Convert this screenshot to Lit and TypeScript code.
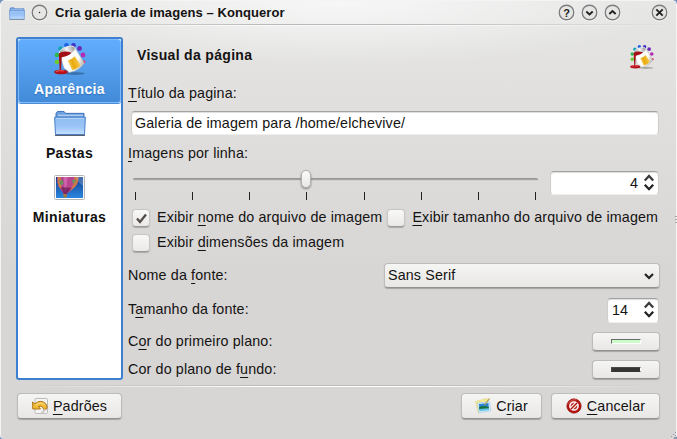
import { LitElement, html, css, svg } from "lit";
import { customElement, property } from "lit/decorators.js";

const folder = svg`
  <defs><linearGradient id="fg" x1="0" y1="0" x2="0" y2="1"><stop offset="0" stop-color="#8fbdf0"/><stop offset=".55" stop-color="#9cc4f8"/><stop offset="1" stop-color="#c3e0ff"/></linearGradient></defs>
  <path d="M2 9V3.500L3.500 1.500H10L11.500 3.500H30V9" fill="#6c9fdd" stroke="#3c71bd"/>
  <path d="M4 5.500H29" stroke="#c5dcf8"/>
  <path d="M.6 7.500H31.400L30.500 25.500H1.500Z" fill="url(#fg)" stroke="#467cc6"/>
  <path d="M2 8.700H30" stroke="#b9d6fa"/>
  <path d="M1 26.400H31" stroke="#555f70" stroke-width="1.200"/>`;

const paint = svg`
  <defs>
    <linearGradient id="pb" x1="0" y1="0" x2="1" y2=".4"><stop offset="0" stop-color="#e4e4e4"/><stop offset=".35" stop-color="#fff"/><stop offset=".8" stop-color="#fbfbf6"/><stop offset="1" stop-color="#c8c8c4"/></linearGradient>
    <linearGradient id="py" x1="0" y1=".4" x2="1" y2="0"><stop offset="0" stop-color="#f7cf5c"/><stop offset=".3" stop-color="#e8a90c"/><stop offset=".65" stop-color="#f3c140"/><stop offset="1" stop-color="#fff0b8"/></linearGradient>
    <linearGradient id="pi" x1="0" y1="0" x2="1" y2="0"><stop offset="0" stop-color="#8a8a8a"/><stop offset=".5" stop-color="#f4f4f4"/><stop offset="1" stop-color="#8f8f8f"/></linearGradient>
  </defs>
  <ellipse cx="21" cy="30.500" rx="10" ry="1.400" fill="#000" opacity=".25"/>
  <circle cx="3" cy="19" r="2.300" fill="#6ccb2c"/><circle cx="3" cy="12" r="2.300" fill="#2bb84c"/>
  <circle cx="6.500" cy="5.500" r="2.300" fill="#18a3b8"/><circle cx="12.500" cy="2.300" r="2.300" fill="#1d5fe0"/>
  <circle cx="19.500" cy="2.300" r="2.300" fill="#3f2fc4"/><circle cx="25.500" cy="5.500" r="2.400" fill="#6b2bb8"/>
  <circle cx="29" cy="12" r="2.400" fill="#b52bb4"/><circle cx="29.700" cy="19" r="1.800" fill="#e03a78"/>
  <path d="M5.300 10.500L21 5L30.300 20Q26.500 27 15.500 29.500L10 25Z" fill="url(#pb)" stroke="#a9a9a4" stroke-width=".5"/>
  <path d="M13.700 17.500Q18 16.500 20.800 13.300L26.700 22Q24 25.500 18.300 27.300Z" fill="url(#py)"/>
  <ellipse cx="13.200" cy="7.700" rx="8.400" ry="3.900" transform="rotate(-20 13.200 7.700)" fill="url(#pi)" stroke="#ececec" stroke-width=".8"/>
  <path d="M4.800 10.500Q10 7 17.500 9.800Q15 13 7.700 14.300L7 27.500H5.700Z" fill="#a30f17"/>
  <ellipse cx="7" cy="29" rx="6.800" ry="2.300" fill="#b5121b"/>
  <path d="M2 28.500Q6 27 10 28" stroke="#ee5a5a" fill="none"/>`;

const balloon = svg`
  <defs><linearGradient id="sky" x1="0" y1="0" x2="0" y2="1"><stop offset="0" stop-color="#123f8f"/><stop offset="1" stop-color="#2b86e0"/></linearGradient></defs>
  <rect x=".5" y=".5" width="31" height="24" rx="1" fill="#fff" stroke="#b4b4b4"/>
  <rect x="2" y="2" width="28" height="21" fill="url(#sky)"/>
  <path d="M3 2H25Q26 10 18 15L13 19H10L5 12Q3 8 3 2Z" fill="#b8468f"/>
  <path d="M4 2H7L8 14L5 12Q3 7 4 2ZM21 2H25Q26 10 18 15L16 16Q21 10 21 2Z" fill="#c87a4a"/>
  <path d="M10 2H14L12.500 16H11Z" fill="#cf62ac"/><path d="M5 6L9 5L10 9L7 10ZM18 5L23 5L20 9Z" fill="#6a9163"/>
  <path d="M7 12L18 13L13 19H10Z" fill="#6a1f55" opacity=".75"/>
  <path d="M9.500 19H13V22.500H10Z" fill="#a8793d"/><path d="M23 2H30V11Q25 8 23 2Z" fill="#fff" opacity=".22"/>`;

const undo = svg`
  <rect x="3" y=".5" width="12.500" height="15" rx="1" fill="#f4f4f4" stroke="#bcbcbc"/>
  <path d="M.5 4L2.800 5.800Q9 .8 14 6Q16 9 14.500 11L11.500 11.500Q11.500 7.800 6.500 8.500L8.500 11H.8Z" fill="#f2bb35" stroke="#a86d12" stroke-width=".9"/>
  <path d="M3.500 7Q9 3 13 7" stroke="#ffe391" fill="none"/>
  <path d="M8 15.500L12 11L14 12L11 15.500Z" fill="#ccc"/>`;

const picture = svg`
  <path d="M.5 3.500L12 .5L15.500 11L3.500 15Z" fill="#f6eb8e" stroke="#ded282" stroke-width=".6"/>
  <path d="M2.500 5L14.500 3.500L15.500 13L4 14.500Z" fill="#e9f5ff" stroke="#9dc7ee" stroke-width=".7"/>
  <path d="M3.800 6L13.500 5L14 11.500L4.800 12.500Z" fill="#2d83d3"/>
  <path d="M4 9Q8 7 13.800 9L14 11L4.500 12Z" fill="#17723f"/>
  <path d="M4.200 11L14 10.300L14.200 12.300L4.700 13.300Z" fill="#63c4ea"/>
  <path d="M14.500 .5L9.500 7" stroke="#b29a3c" stroke-width="1.200"/>`;

const deny = svg`
  <circle cx="8" cy="8" r="7.200" fill="#b3120f" stroke="#8b0a08" stroke-width=".6"/>
  <circle cx="8" cy="8" r="4.100" fill="#c4302c" stroke="#fff" stroke-width="1.500"/>
  <path d="M5 11L11 5" stroke="#fff" stroke-width="3.600"/><path d="M4.800 11.200L11.200 4.800" stroke="#b3120f" stroke-width="1.500"/>
  <path d="M2.500 5.500Q5 1.200 10.500 1.800" stroke="#e8706a" fill="none" stroke-width=".8"/>`;

const icons: Record<string, [string, unknown]> = {
  folder: ["0 0 32 27", folder],
  paint: ["0 0 32 32", paint],
  balloon: ["0 0 32 25", balloon],
  undo: ["0 0 16 16", undo],
  picture: ["0 0 16 16", picture],
  deny: ["0 0 16 16", deny],
};

@customElement("ui-icon")
class UiIcon extends LitElement {
  @property() name = "folder";
  static styles = css`
    :host { display: block; flex: none; }
    svg { display: block; width: 100%; height: 100%; }
  `;
  render() {
    const [box, body] = icons[this.name];
    return html`<svg viewBox=${box} preserveAspectRatio="none">${body}</svg>`;
  }
}

@customElement("title-button")
class TitleButton extends LitElement {
  @property() kind = "";
  static styles = css`
    :host { display: block; width: 17px; height: 17px; flex: none; }
    svg { display: block; }
    text { font: bold 11px "Liberation Sans", sans-serif; fill: #222; }
  `;
  render() {
    const glyphs: Record<string, unknown> = {
      menu: svg`<circle cx="8.500" cy="8.500" r=".8" fill="#333"/>`,
      help: svg`<text x="8.500" y="12.500" text-anchor="middle">?</text>`,
      down: svg`<path d="M5.300 7.500L8.500 10.500L11.700 7.500"/>`,
      up: svg`<path d="M5.300 10L8.500 7L11.700 10"/>`,
      close: svg`<path d="M5.300 5.300L11.700 11.700M11.700 5.300L5.300 11.700"/>`,
    };
    return html`<svg width="17" height="17" fill="none" stroke="#222" stroke-width="1.6" overflow="visible">
      <circle cx="8.500" cy="9.100" r="7.800" stroke="#fff" stroke-width="1.200"/>
      <circle cx="8.500" cy="8.500" r="7.300" fill="#e6e6e5" stroke="#7c7c7e" stroke-width="1.400"/>
      <g stroke-width=${this.kind === "menu" || this.kind === "help" ? "0" : "1.9"}>${glyphs[this.kind]}</g>
    </svg>`;
  }
}

const chevrons = html`<svg class="chev" width="12" height="18" fill="none" stroke="#222" stroke-width="2.3">
  <path d="M1.800 6.500L6 2L10.200 6.500" stroke="#3c3c3c"/><path d="M1.800 10.800L6 15.200L10.200 10.800"/></svg>`;

@customElement("app-root")
class AppRoot extends LitElement {
  static styles = css`
    * { box-sizing: border-box; }
    :host {
      display: block; width: 677px; height: 439px; overflow: hidden; background: #6f8fbd;
      font: 14.3px/18px "Liberation Sans", Arial, sans-serif; color: #141312; white-space: nowrap;
    }
    .window {
      height: 439px; display: flex; flex-direction: column; border-radius: 5px 5px 4px 4px; position: relative;
      border: solid #f4f4f4; border-width: 1px 1px 0 1px;
      background: radial-gradient(ellipse 330px 64px at 50% 0, #f7f7f7, rgba(247,247,247,0)),
        linear-gradient(#e6e6e5, #e0dfde 110px, #d7d6d5 270px, #d7d6d5);
    }
    .titlebar { height: 23px; flex: none; display: flex; align-items: center; padding: 0 8px 0 8px; }
    .titlebar ui-icon { width: 16px; height: 13px; margin-top: 1px; }
    .menu { margin-left: 6px; }
    .caption { font-size: 13px; font-weight: bold; margin-left: 7px; flex: 1; padding-top: 1px; letter-spacing: .08px; }
    .buttons { display: flex; gap: 6px; }
    .buttons :last-child { margin-left: 24px; }
    .rule { height: 2px; flex: none; }
    .rule.top { background: linear-gradient(#b8b8b8 50%, #fafafa 50%); -webkit-mask: linear-gradient(90deg, transparent, #000 40%, #000 60%, transparent); margin-bottom: 11px; }
    .rule.bottom { background: linear-gradient(#bababa 50%, #fff 50%); -webkit-mask: linear-gradient(90deg, transparent, #000 40%, #000 60%, transparent); margin: 5px 16px 6px; }
    .body { display: flex; height: 343px; flex: none; padding-left: 15px; }
    .pages { width: 107px; border: 2px solid #3d7fd0; border-radius: 3px; background: #fff; }
    .page { height: 64px; display: flex; flex-direction: column; align-items: center; font-weight: bold; color: #111; padding-top: 4px; }
    .page .art { height: 32px; display: flex; align-items: center; margin-bottom: 5px; }
    .page span { font-size: 14px; line-height: 18px; letter-spacing: .35px; }
    .page.active { color: #fff; background: linear-gradient(#62adfd, #438bd8); border: 1px solid #7ebafa; border-radius: 3px; box-shadow: 0 1px 0 #4a8ddb; padding-top: 3px; text-shadow: 0 1px 1px #2d6eb8; }
    .big { width: 32px; height: 32px; }
    .folder { width: 32px; height: 26px; }
    .thumb { width: 31px; height: 25px; }
    .form { flex: 1; display: grid; grid-template-rows: 37px 37px 24px 36px 34px 25px 25px 41px 28px 35px 21px; padding: 0 16px 0 5px; }
    .row { display: flex; align-items: center; justify-content: space-between; }
    .heading { font-weight: bold; font-size: 14px; letter-spacing: .32px; padding: 0 6px 0 9px; }
    .heading span { padding-bottom: 2px; }
    .heading ui-icon { width: 24px; height: 24px; margin-top: 3px; }
    u { text-decoration: underline; text-decoration-thickness: 1px; text-underline-offset: 3px; text-decoration-skip-ink: none; }
    .field { background: #fff; border: 1px solid; border-color: #a2a2a1 #cfcecd #efefee; border-radius: 4px; height: 24px; display: flex; align-items: center; box-shadow: inset 0 1px 1px #ddd; }
    .name { margin: 0 1px 0 3px; padding-left: 3px; }
    .spin { justify-content: flex-end; gap: 5px; padding-right: 3px; margin-right: 1px; }
    .spin.wide { width: 109px; }
    .spin.small { width: 52px; gap: 15px; height: 25px; }
    .spin.small span { padding-bottom: 1px; }
    .top { align-items: flex-start; }
    .slider { width: 405px; margin-left: 5px; display: grid; grid-template-rows: 17px 12px; }
    .groove { height: 3px; margin-top: 7px; border-radius: 2px; background: linear-gradient(#929190, #a9a8a7 60%, #efeeed); position: relative; }
    .knob { position: absolute; left: 168px; top: -8px; width: 10px; height: 18px; border-radius: 5px; background: linear-gradient(#fafafa, #e8e8e7); border: 1px solid #b1b0af; box-shadow: 0 1px 2px #777; }
    .ticks { display: flex; justify-content: space-between; padding: 4px 2px 0; }
    .ticks i { width: 1px; height: 8px; background: #222; }
    .checks { justify-content: flex-start; padding-left: 4px; }
    .box { width: 18px; height: 18px; flex: none; border-radius: 4px; background: linear-gradient(#f8f8f7, #eae9e8); border: 1px solid #c6c5c4; border-bottom-color: #999; box-shadow: 0 1px 1px #aaa; margin-right: 7px; }
    .box svg { display: block; }
    .second { margin-left: 5px; }
    .button { border: 1px solid #bdbcbb; border-bottom-color: #929190; border-radius: 4px; background: linear-gradient(#f5f5f4, #e8e7e6); box-shadow: 0 1px 1px #a6a5a4; display: flex; align-items: center; justify-content: center; height: 26px; }
    .combo { width: 276px; height: 25px; justify-content: space-between; padding: 0 4px 0 3px; }
    .swatch { width: 68px; height: 19px; }
    .swatch i { width: 30px; height: 5px; border: 1px solid; border-color: #6b6b6b #fff #fff #6b6b6b; }
    .green { background: #cafdc8; }
    .swatch .dark { background: #353535; border-color: #494949 #fff #353535 #494949; }
    .actions { display: flex; padding: 0 16px; gap: 9px; }
    .actions .button { gap: 5px; }
    .actions ui-icon { width: 16px; height: 16px; }
    .defaults { width: 105px; margin-right: auto; }
    .create { width: 81px; }
    .cancel { width: 109px; }
    .a { letter-spacing: .14px; }
    .row > .a, .combo .a { padding-bottom: 2px; }
    .plain > .a { padding-bottom: 0; }
    .grip { position: absolute; right: -1px; fill: #a3a3a3; }
    .side { top: 214px; }
    .corner { bottom: 0; fill: #8798b0; }
  `;
  render() {
    return html`<div class="window">
      <div class="titlebar">
        <ui-icon name="folder"></ui-icon>
        <title-button class="menu" kind="menu"></title-button>
        <span class="caption">Cria galeria de imagens – Konqueror</span>
        <div class="buttons">
          ${["help", "down", "up", "close"].map((k) => html`<title-button kind=${k}></title-button>`)}
        </div>
      </div>
      <div class="rule top"></div>
      <div class="body">
        <div class="pages">
          <div class="page active"><div class="art"><ui-icon class="big" name="paint"></ui-icon></div><span>Aparência</span></div>
          <div class="page"><div class="art"><ui-icon class="folder" name="folder"></ui-icon></div><span>Pastas</span></div>
          <div class="page"><div class="art"><ui-icon class="thumb" name="balloon"></ui-icon></div><span>Miniaturas</span></div>
        </div>
        <div class="form">
          <div class="row heading"><span>Visual da página</span><ui-icon name="paint"></ui-icon></div>
          <div class="row plain"><span class="a"><u>T</u>ítulo da pagina:</span></div>
          <div class="field name"><span class="a">Galeria de imagem para /home/elchevive/</span></div>
          <div class="row plain"><span class="a"><u>I</u>magens por linha:</span></div>
          <div class="row top">
            <div class="slider"><div class="groove"><div class="knob"></div></div>
              <div class="ticks">${Array.from({ length: 8 }, () => html`<i></i>`)}</div></div>
            <div class="field spin wide"><span>4</span>${chevrons}</div>
          </div>
          <div class="row checks">
            <div class="box"><svg width="16" height="16" fill="none" stroke="#514c49" stroke-width="2.3"><path d="M4 8.500L7 12L13 4.500"/></svg></div>
            <span class="a">Exibir <u>n</u>ome do arquivo de imagem</span>
            <div class="box second"></div><span class="a"><u>E</u>xibir tamanho do arquivo de imagem</span>
          </div>
          <div class="row checks"><div class="box"></div><span class="a">Exibir <u>d</u>imensões da imagem</span></div>
          <div class="row"><span class="a">Nome da <u>f</u>onte:</span>
            <div class="button combo"><span class="a">Sans Serif</span><svg width="12" height="10" fill="none" stroke="#222" stroke-width="2.2"><path d="M2 3L6 7L10 3"/></svg></div></div>
          <div class="row"><span class="a">T<u>a</u>manho da fonte:</span><div class="field spin small"><span>14</span>${chevrons}</div></div>
          <div class="row"><span class="a">C<u>o</u>r do primeiro plano:</span><div class="button swatch"><i class="green"></i></div></div>
          <div class="row"><span class="a">Cor do plano de f<u>u</u>ndo:</span><div class="button swatch"><i class="dark"></i></div></div>
        </div>
      </div>
      <div class="rule bottom"></div>
      <div class="actions">
        <div class="button defaults"><ui-icon name="undo"></ui-icon><span class="a"><u>P</u>adrões</span></div>
        <div class="button create"><ui-icon name="picture"></ui-icon><span class="a">C<u>r</u>iar</span></div>
        <div class="button cancel"><ui-icon name="deny"></ui-icon><span class="a"><u>C</u>ancelar</span></div>
      </div>
      <svg class="grip side" width="2" height="9"><path d="M0 1H2V2H0ZM0 4H2V5H0ZM0 7H2V8H0Z"/></svg>
      <svg class="grip corner" width="7" height="7"><path d="M5 0H6V1H5ZM3 2H4V3H3ZM5 3H6V4H5ZM1 4H2V5H1ZM4 5H7V7H4Z"/></svg>
    </div>`;
  }
}
